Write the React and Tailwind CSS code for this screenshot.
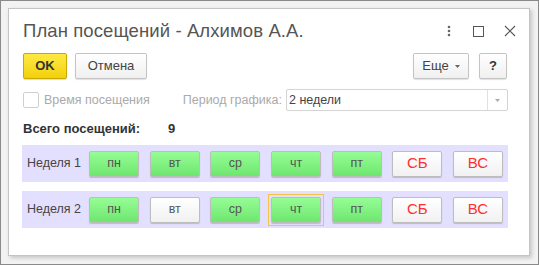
import React from 'react';

// ── Day button config ────────────────────────────────────────────────────────
const DAYS = [
    { key: 'пн', weekend: false },
    { key: 'вт', weekend: false },
    { key: 'ср', weekend: false },
    { key: 'чт', weekend: false },
    { key: 'пт', weekend: false },
    { key: 'СБ', weekend: true },
    { key: 'ВС', weekend: true },
];

const WEEKS = [
    { label: 'Неделя 1', on: ['пн', 'вт', 'ср', 'чт', 'пт'], focus: null },
    { label: 'Неделя 2', on: ['пн', 'ср', 'чт', 'пт'], focus: 'чт' },
];

const DayButton = ({ day, on, focus }) => {
    const btn = on
        ? 'bg-gradient-to-b from-[#95fd95] to-[#6ee66e] text-[#555] text-[12.5px]'
        : day.weekend
            ? 'bg-gradient-to-b from-white to-[#f1f1f1] text-[#ff3030] text-[15px]'
            : 'bg-gradient-to-b from-white to-[#f1f1f1] text-[#555] text-[12.5px]';
    return (
        <div className={`w-[50px] h-[26px] relative ${focus ? 'outline outline-1 outline-[#f5c542] outline-offset-[2px]' : ''}`}>
            <div className={`w-full h-full flex items-center justify-center rounded-[2px] border border-[#bdbdbd] shadow-[0_1px_1px_rgba(0,0,0,0.18)] ${btn}`}>
                {day.key}
            </div>
        </div>
    );
};

export default function App() {
    return (
        <div className="w-[539px] h-[265px] bg-[#f2f2f2] border border-[#8a8a8a] pt-[7px] pl-[7px] font-['Liberation_Sans',Arial,sans-serif]">
            <div className="w-[522px] h-[248px] bg-white border border-[#c4c4c4] shadow-[2px_2px_4px_rgba(0,0,0,0.18)] pl-[13px] pr-[21px]">
                {/* Title */}
                <div className="flex items-center h-[24px] mt-[10px] ml-[1px]">
                    <span className="text-[18.5px] text-[#555] tracking-[0.1px]">План посещений - Алхимов А.А.</span>
                    <div className="ml-auto flex items-center text-[#555] mr-[-8px]">
                        <svg width="4" height="12" viewBox="0 0 4 12" className="mr-[22px]">
                            <circle cx="2" cy="2" r="1.3" fill="#666" />
                            <circle cx="2" cy="6" r="1.3" fill="#666" />
                            <circle cx="2" cy="10" r="1.3" fill="#666" />
                        </svg>
                        <svg width="11" height="11" viewBox="0 0 11 11" className="mr-[20px]">
                            <rect x="0.5" y="0.5" width="10" height="10" fill="none" stroke="#555" />
                        </svg>
                        <svg width="12" height="12" viewBox="0 0 12 12">
                            <path d="M1 1 L11 11 M11 1 L1 11" stroke="#555" strokeWidth="1.1" />
                        </svg>
                    </div>
                </div>

                {/* Toolbar */}
                <div className="flex items-center mt-[10px] ml-[1px] h-[26px]">
                    <button className="w-[44px] h-[26px] rounded-[2px] border border-[#c9aa00] bg-gradient-to-b from-[#ffe940] to-[#f2d100] text-[13px] font-bold text-[#333] shadow-[0_1px_1px_rgba(0,0,0,0.15)]">
                        OK
                    </button>
                    <button className="ml-[8px] w-[72px] h-[26px] rounded-[2px] border border-[#c4c4c4] bg-gradient-to-b from-white to-[#f0f0f0] text-[13px] text-[#444] shadow-[0_1px_1px_rgba(0,0,0,0.12)]">
                        Отмена
                    </button>
                    <button className="ml-auto w-[56px] h-[26px] rounded-[2px] border border-[#c4c4c4] bg-gradient-to-b from-white to-[#f0f0f0] text-[13px] text-[#444] flex items-center justify-center gap-[6px] shadow-[0_1px_1px_rgba(0,0,0,0.12)]">
                        Еще
                        <svg width="5" height="3" viewBox="0 0 5 3"><path d="M0 0 H5 L2.5 3 Z" fill="#666" /></svg>
                    </button>
                    <button className="ml-[10px] mr-[1px] w-[28px] h-[26px] rounded-[2px] border border-[#c4c4c4] bg-gradient-to-b from-white to-[#f0f0f0] text-[13px] font-bold text-[#333] shadow-[0_1px_1px_rgba(0,0,0,0.12)]">
                        ?
                    </button>
                </div>

                {/* Options */}
                <div className="flex items-center mt-[10px] h-[22px] ml-[1px]">
                    <span className="w-[16px] h-[16px] border border-[#d0d0d0] rounded-[2px] bg-white" />
                    <span className="ml-[5px] text-[12.5px] text-[#aaa]">Время посещения</span>
                    <span className="ml-[33px] text-[12.5px] text-[#aaa]">Период графика:</span>
                    <div className="ml-[4px] flex-1 h-[22px] border border-[#d4d4d4] rounded-[2px] flex items-center">
                        <span className="pl-[2px] text-[12.5px] text-[#444] flex-1">2 недели</span>
                        <div className="w-[20px] h-full border-l border-[#e0e0e0] flex items-center justify-center">
                            <svg width="5" height="3" viewBox="0 0 5 3"><path d="M0 0 H5 L2.5 3 Z" fill="#aaa" /></svg>
                        </div>
                    </div>
                </div>

                {/* Total */}
                <div className="flex items-center mt-[9px] h-[18px] ml-[1px] text-[13px] font-bold text-[#333]">
                    <span className="w-[145px]">Всего посещений:</span>
                    <span>9</span>
                </div>

                {/* Weeks */}
                {WEEKS.map((w, i) => (
                    <div key={w.label} className={`flex items-center h-[37px] bg-[#e3e0ff] pl-[5px] pr-[5px] ${i === 0 ? 'mt-[7px]' : 'mt-[9px]'}`}>
                        <span className="w-[64px] text-[12.5px] text-[#444]">{w.label}</span>
                        <div className="flex gap-[10.67px]">
                            {DAYS.map((d) => (
                                <DayButton key={d.key} day={d} on={w.on.includes(d.key)} focus={w.focus === d.key} />
                            ))}
                        </div>
                    </div>
                ))}
            </div>
        </div>
    );
}
